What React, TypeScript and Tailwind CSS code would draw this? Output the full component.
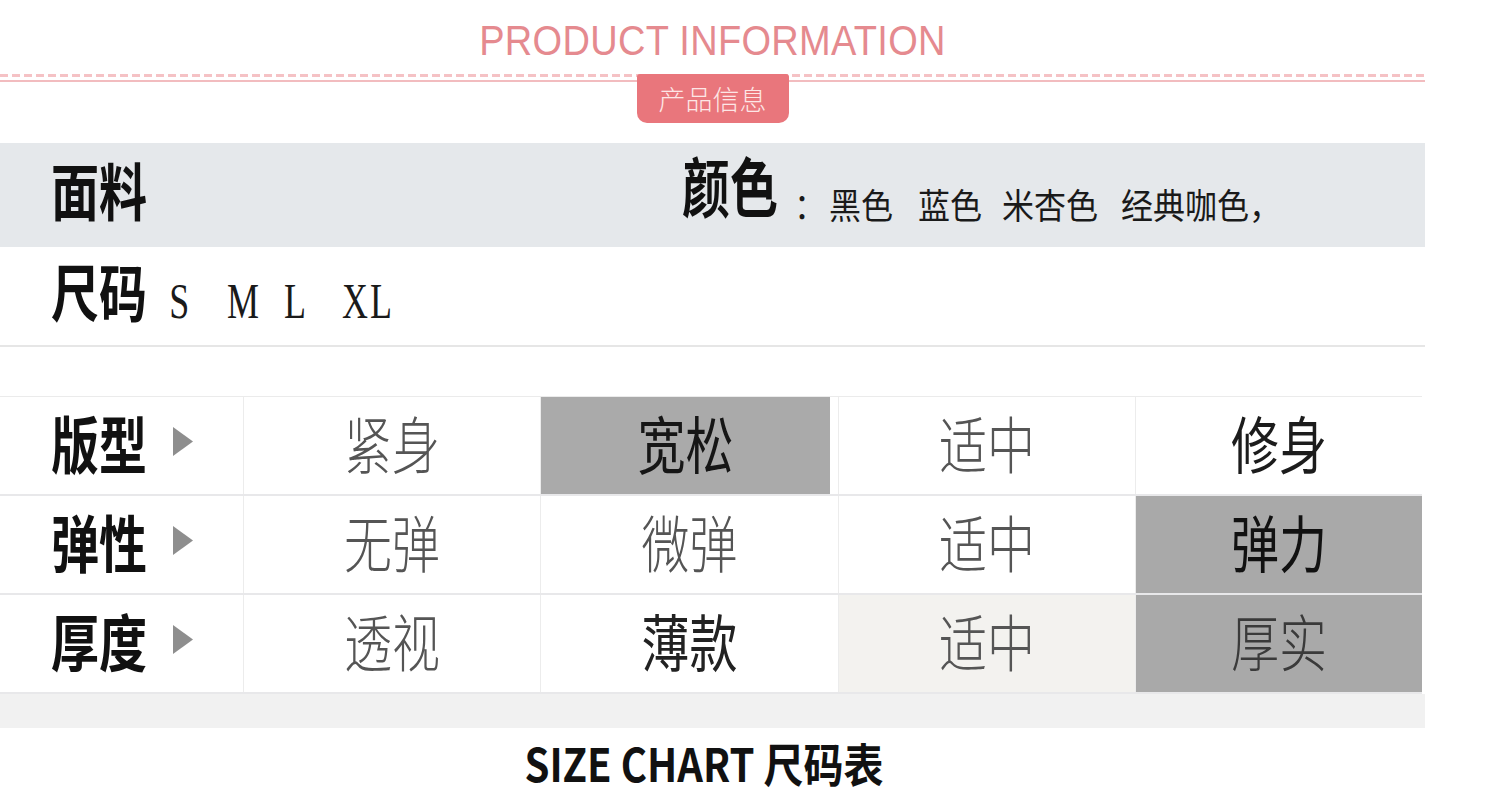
const cjk = "font-['Noto_Sans_CJK_SC',sans-serif]";

type Cell = { text: string; tone: string; bg?: string; inset?: boolean };

const rows: { label: string; cells: Cell[] }[] = [
  {
    label: "版型",
    cells: [
      { text: "紧身", tone: "font-light text-[#555]" },
      { text: "宽松", tone: "font-normal text-[#161616]", bg: "bg-[#aaaaaa]", inset: true },
      { text: "适中", tone: "font-light text-[#555]" },
      { text: "修身", tone: "font-normal text-[#1c1c1c]" },
    ],
  },
  {
    label: "弹性",
    cells: [
      { text: "无弹", tone: "font-light text-[#555]" },
      { text: "微弹", tone: "font-light text-[#555]" },
      { text: "适中", tone: "font-light text-[#555]" },
      { text: "弹力", tone: "font-normal text-[#111]", bg: "bg-[#a9a9a9]" },
    ],
  },
  {
    label: "厚度",
    cells: [
      { text: "透视", tone: "font-light text-[#555]" },
      { text: "薄款", tone: "font-normal text-[#222]" },
      { text: "适中", tone: "font-light text-[#555]", bg: "bg-[#f3f2ef]" },
      { text: "厚实", tone: "font-light text-[#3a3a3a]", bg: "bg-[#a9a9a9]" },
    ],
  },
];

const sizes = ["S", " ", "M", " ", "L", " ", "X", "L"];

function Arrow() {
  return (
    <svg width="20" height="29" viewBox="0 0 20 29" className="ml-[26px]">
      <polygon points="0,0 20,14.5 0,29" fill="#8e8e8e" />
    </svg>
  );
}

function Label({ text }: { text: string }) {
  return (
    <span className="inline-block text-[48px] leading-none font-bold scale-y-[1.3] text-[#111]">
      {text}
    </span>
  );
}

export default function App() {
  return (
    <div className={`w-[1500px] h-[795px] overflow-hidden bg-white ${cjk}`}>
      <div className="w-[1425px]">
        {/* header */}
        <div className="h-[143px] flex flex-col items-center">
          <div className="mt-[20px] h-[41px] leading-[41px] text-[38px] tracking-[0.3px] scale-y-[1.14] text-[#e58a8f] font-['Liberation_Sans',Arial,sans-serif]">
            PRODUCT INFORMATION
          </div>
          <div className="mt-[13px] w-full h-[3px] bg-[repeating-linear-gradient(90deg,#f5c2c5_0px,#f5c2c5_8px,transparent_8px,transparent_12px)]" />
          <div className="mt-[3px] w-full h-[2px] bg-[#f2bcbf]" />
          <div className="relative -mt-[8px] w-[152px] h-[49px] rounded-t-[3px] rounded-b-[10px] bg-[#e9767c] flex items-center justify-center text-[27px] leading-none font-light text-[#fde6e6]">
            产品信息
          </div>
        </div>

        {/* fabric / colour */}
        <div className="h-[104px] bg-[#e5e8eb] flex items-start pl-[51px]">
          <div className="mt-[22px] w-[631px]">
            <Label text="面料" />
          </div>
          <span className="mt-[17px] inline-block text-[48px] leading-none font-bold scale-y-[1.35] text-[#111]">
            颜色
          </span>
          <div className="mt-[45px] flex text-[32px] leading-none scale-y-[1.1] text-[#1a1a1a]">
            <span className="ml-[16px]">：</span>
            <span className="ml-[3px]">黑色</span>
            <span className="ml-[25px]">蓝色</span>
            <span className="ml-[20px]">米杏色</span>
            <span className="ml-[23px]">经典咖色，</span>
          </div>
        </div>

        {/* sizes */}
        <div className="h-[100px] border-b-2 border-[#e6e6e6] flex items-start pl-[51px]">
          <div className="mt-[19px]">
            <Label text="尺码" />
          </div>
          <div className="mt-[29px] ml-[18px] flex text-[50px] leading-none text-[#1a1a1a] font-['Liberation_Serif',serif]">
            {sizes.map((s, i) => (
              <span key={i} className="inline-block w-[28.75px] text-center scale-x-[0.72]">
                {s === " " ? "\u00a0" : s}
              </span>
            ))}
          </div>
        </div>

        {/* fit table */}
        <div className="mt-[49px] w-[1422px] border-t border-[#ebebeb]">
          {rows.map((r) => (
            <div
              key={r.label}
              className="grid grid-cols-[243px_297px_298px_297px_287px] h-[99px] border-b-2 border-[#e8e8ea]"
            >
              <div className="flex items-center pl-[51px] pb-[8px]">
                <Label text={r.label} />
                <Arrow />
              </div>
              {r.cells.map((c, i) => (
                <div key={i} className="border-l border-[#ececec] flex">
                  <div
                    className={`flex-1 flex items-center justify-center pb-[8px] ${c.bg ?? ""} ${c.inset ? "mr-[8px]" : ""}`}
                  >
                    <span className={`inline-block text-[48px] leading-none scale-y-[1.3] ${c.tone}`}>
                      {c.text}
                    </span>
                  </div>
                </div>
              ))}
            </div>
          ))}
        </div>

        <div className="h-[34px] bg-[#f1f1f1]" />

        <div className="ml-[495px] w-[418px] pt-[14px] text-center">
          <span className="inline-block text-[40px] leading-none font-bold scale-y-[1.15] text-[#111]">
            SIZE CHART 尺码表
          </span>
        </div>
      </div>
    </div>
  );
}
